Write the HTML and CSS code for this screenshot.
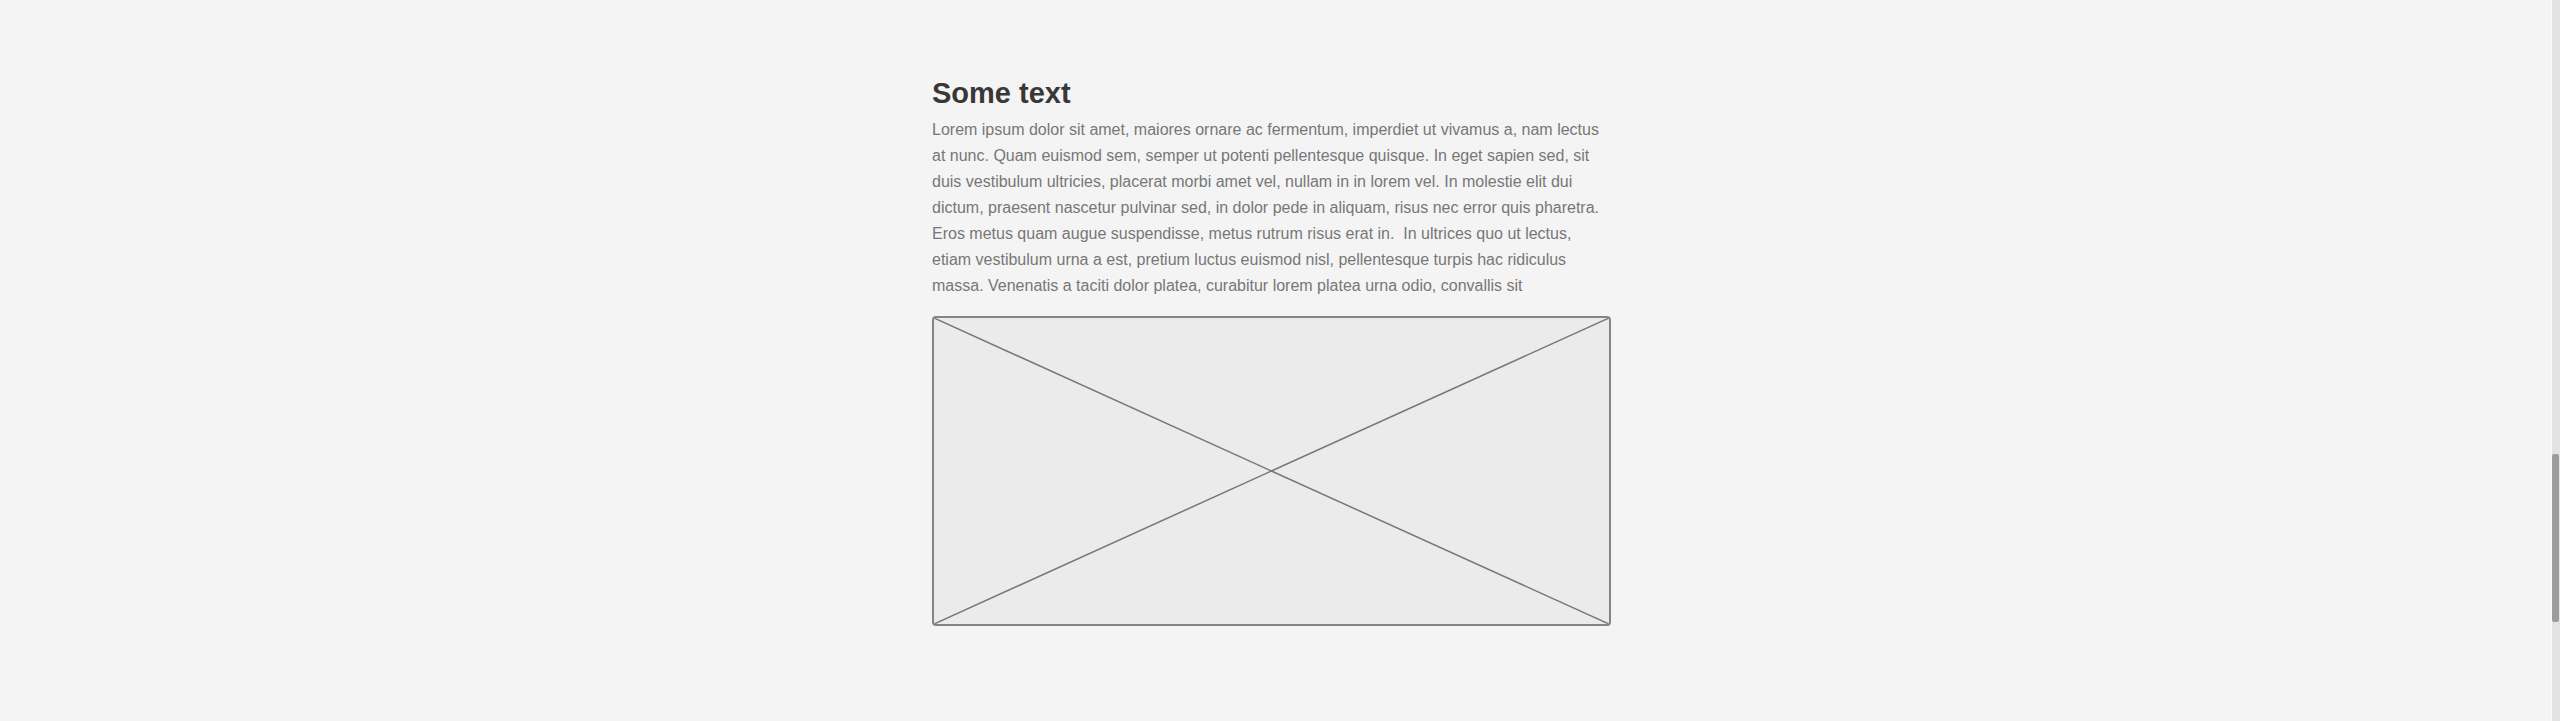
FILE: index.html
```html
<!DOCTYPE html>
<html lang="en">
<head>
<meta charset="utf-8">
<title>Some text</title>
<link rel="stylesheet" href="styles.css">
</head>
<body>
<div class="page">
  <main class="content">
    <h1 class="title">Some text</h1>
    <p class="body-text">Lorem ipsum dolor sit amet, maiores ornare ac fermentum, imperdiet ut vivamus a, nam lectus at nunc. Quam euismod sem, semper ut potenti pellentesque quisque. In eget sapien sed, sit duis vestibulum ultricies, placerat morbi amet vel, nullam in in lorem vel. In molestie elit dui dictum, praesent nascetur pulvinar sed, in dolor pede in aliquam, risus nec error quis pharetra. Eros metus quam augue suspendisse, metus rutrum risus erat in.&nbsp; In ultrices quo ut lectus, etiam vestibulum urna a est, pretium luctus euismod nisl, pellentesque turpis hac ridiculus massa. Venenatis a taciti dolor platea, curabitur lorem platea urna odio, convallis sit</p>
    <div class="placeholder">
      <svg class="cross" viewBox="0 0 100 100" preserveAspectRatio="none">
        <line x1="0" y1="0" x2="100" y2="100" vector-effect="non-scaling-stroke"/>
        <line x1="100" y1="0" x2="0" y2="100" vector-effect="non-scaling-stroke"/>
      </svg>
    </div>
  </main>
</div>
<div class="scrollbar"><div class="thumb"></div></div>
</body>
</html>
```

FILE: styles.css
```css
html, body {
  margin: 0;
  padding: 0;
  height: 100%;
  overflow: hidden;
  background: #f4f4f4;
}

body {
  font-family: "Liberation Sans", Arial, sans-serif;
}

.page {
  display: flex;
  justify-content: center;
  padding: 76px 17px 0 0;
}

.content {
  width: 679px;
  display: flex;
  flex-direction: column;
}

.title {
  margin: 0;
  font-size: 29px;
  line-height: 34px;
  font-weight: bold;
  color: #383838;
}

.body-text {
  margin: 7px 0 0 0;
  font-size: 16px;
  line-height: 26px;
  color: #777777;
}

.placeholder {
  margin-top: 17px;
  height: 310px;
  box-sizing: border-box;
  border: 2px solid #858585;
  border-radius: 4px;
  background: #ebebeb;
  overflow: hidden;
}

.cross {
  display: block;
  width: 100%;
  height: 100%;
}

.cross line {
  stroke: #777777;
  stroke-width: 1.5;
}

.scrollbar {
  position: fixed;
  top: 0;
  right: 0;
  width: 8px;
  height: 100%;
  background: #e3e3e3;
  border-left: 1px solid #fafafa;
}

.thumb {
  margin-top: 454px;
  width: 7px;
  height: 168px;
  background: #9c9c9c;
  border-radius: 2px;
}
```
